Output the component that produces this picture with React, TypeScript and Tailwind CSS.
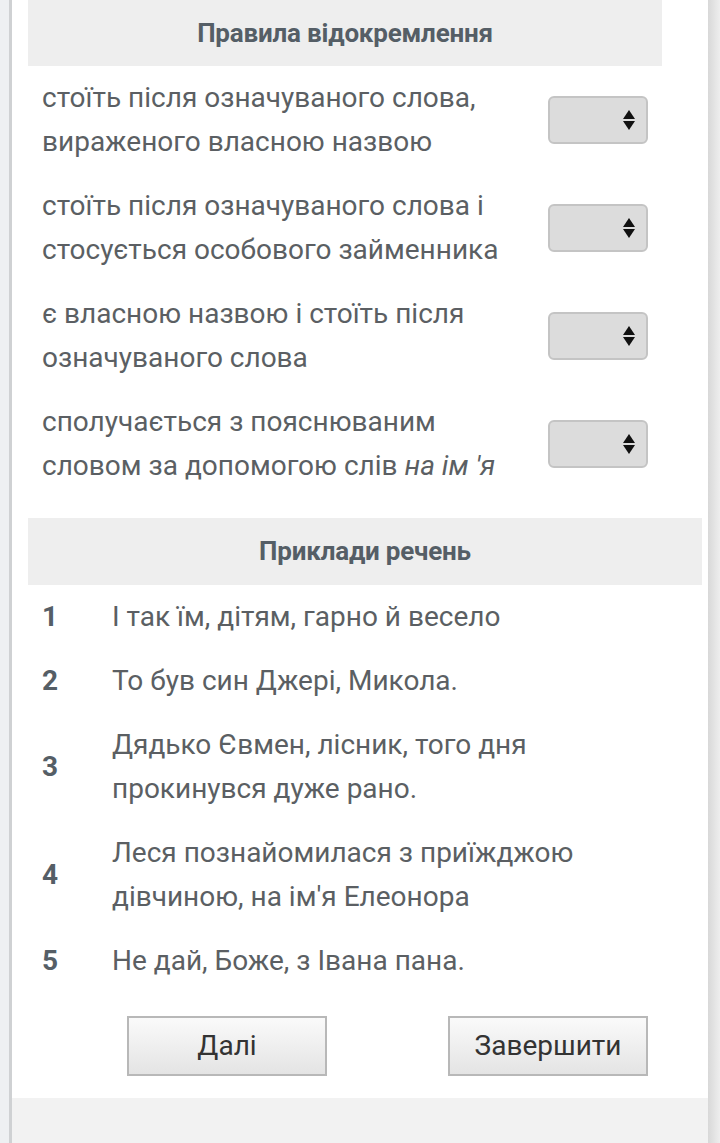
import React from 'react';

const rules: React.ReactNode[] = [
  'стоїть після означуваного слова, вираженого власною назвою',
  'стоїть після означуваного слова і стосується особового займенника',
  'є власною назвою і стоїть після означуваного слова',
  <>
    сполучається з пояснюваним словом за допомогою слів <i>на ім 'я</i>
  </>,
];

const examples = [
  'І так їм, дітям, гарно й весело',
  'То був син Джері, Микола.',
  'Дядько Євмен, лісник, того дня прокинувся дуже рано.',
  'Леся познайомилася з приїжджою дівчиною, на ім\'я Елеонора',
  'Не дай, Боже, з Івана пана.',
];

const SelectBox = () => (
  <div className="w-[100px] h-[48px] rounded-[6px] border-2 border-[#c4c4c4] bg-[#dcdcdc] flex items-center justify-end pr-[10px]">
    <svg width="14" height="22" viewBox="0 0 14 22">
      <path d="M7 1 L13 10 L1 10 Z" fill="#111" />
      <path d="M1 12 L13 12 L7 21 Z" fill="#111" />
    </svg>
  </div>
);

export default function App() {
  return (
    <div className="min-h-[1143px] bg-[#eef0f2] flex" style={{ fontFamily: 'Roboto, "Noto Sans", sans-serif' }}>
      <div className="w-[9px] shrink-0" />
      <div className="w-[3px] shrink-0 bg-[#cfd1d3]" />
      <div className="w-[696px] shrink-0 bg-white flex flex-col">
        <div className="pl-[16px] pr-[6px]">
          <div className="w-[634px]">
            <div className="h-[66px] bg-[#eeeeee] flex items-center justify-center text-[26px] font-bold text-[#555e66] tracking-[-0.2px]">
              Правила відокремлення
            </div>
            {rules.map((r, i) => (
              <div key={i} className="flex items-center py-[10px] pl-[14px] pr-[14px]">
                <div className="w-[470px] text-[28px] leading-[44px] text-[#5b5f63]">{r}</div>
                <div className="flex-1 flex justify-end">
                  <SelectBox />
                </div>
              </div>
            ))}
          </div>
          <div className="mt-[20px] w-[674px]">
            <div className="h-[67px] bg-[#eeeeee] flex items-center justify-center text-[26px] font-bold text-[#555e66] tracking-[-0.2px]">
              Приклади речень
            </div>
            {examples.map((e, i) => (
              <div key={i} className="flex items-center py-[10px] pl-[14px]">
                <div className="w-[70px] text-[28px] font-bold text-[#555e66]">{i + 1}</div>
                <div className="w-[540px] text-[28px] leading-[44px] text-[#5b5f63]">{e}</div>
              </div>
            ))}
          </div>
        </div>
        <div className="flex pt-[23px] pb-[22px]">
          <div className="w-[115px]" />
          <button className="w-[200px] h-[60px] border-2 border-[#b8b8b8] bg-gradient-to-b from-[#fafafa] to-[#e4e4e4] text-[28px] text-[#333]">
            Далі
          </button>
          <div className="w-[121px]" />
          <button className="w-[200px] h-[60px] border-2 border-[#b8b8b8] bg-gradient-to-b from-[#fafafa] to-[#e4e4e4] text-[28px] text-[#333]">
            Завершити
          </button>
        </div>
        <div className="flex-1 bg-[#f2f2f2]" />
      </div>
      <div className="flex-1 bg-gradient-to-r from-[#d8d8d8] to-[#eeeeee]" />
    </div>
  );
}
